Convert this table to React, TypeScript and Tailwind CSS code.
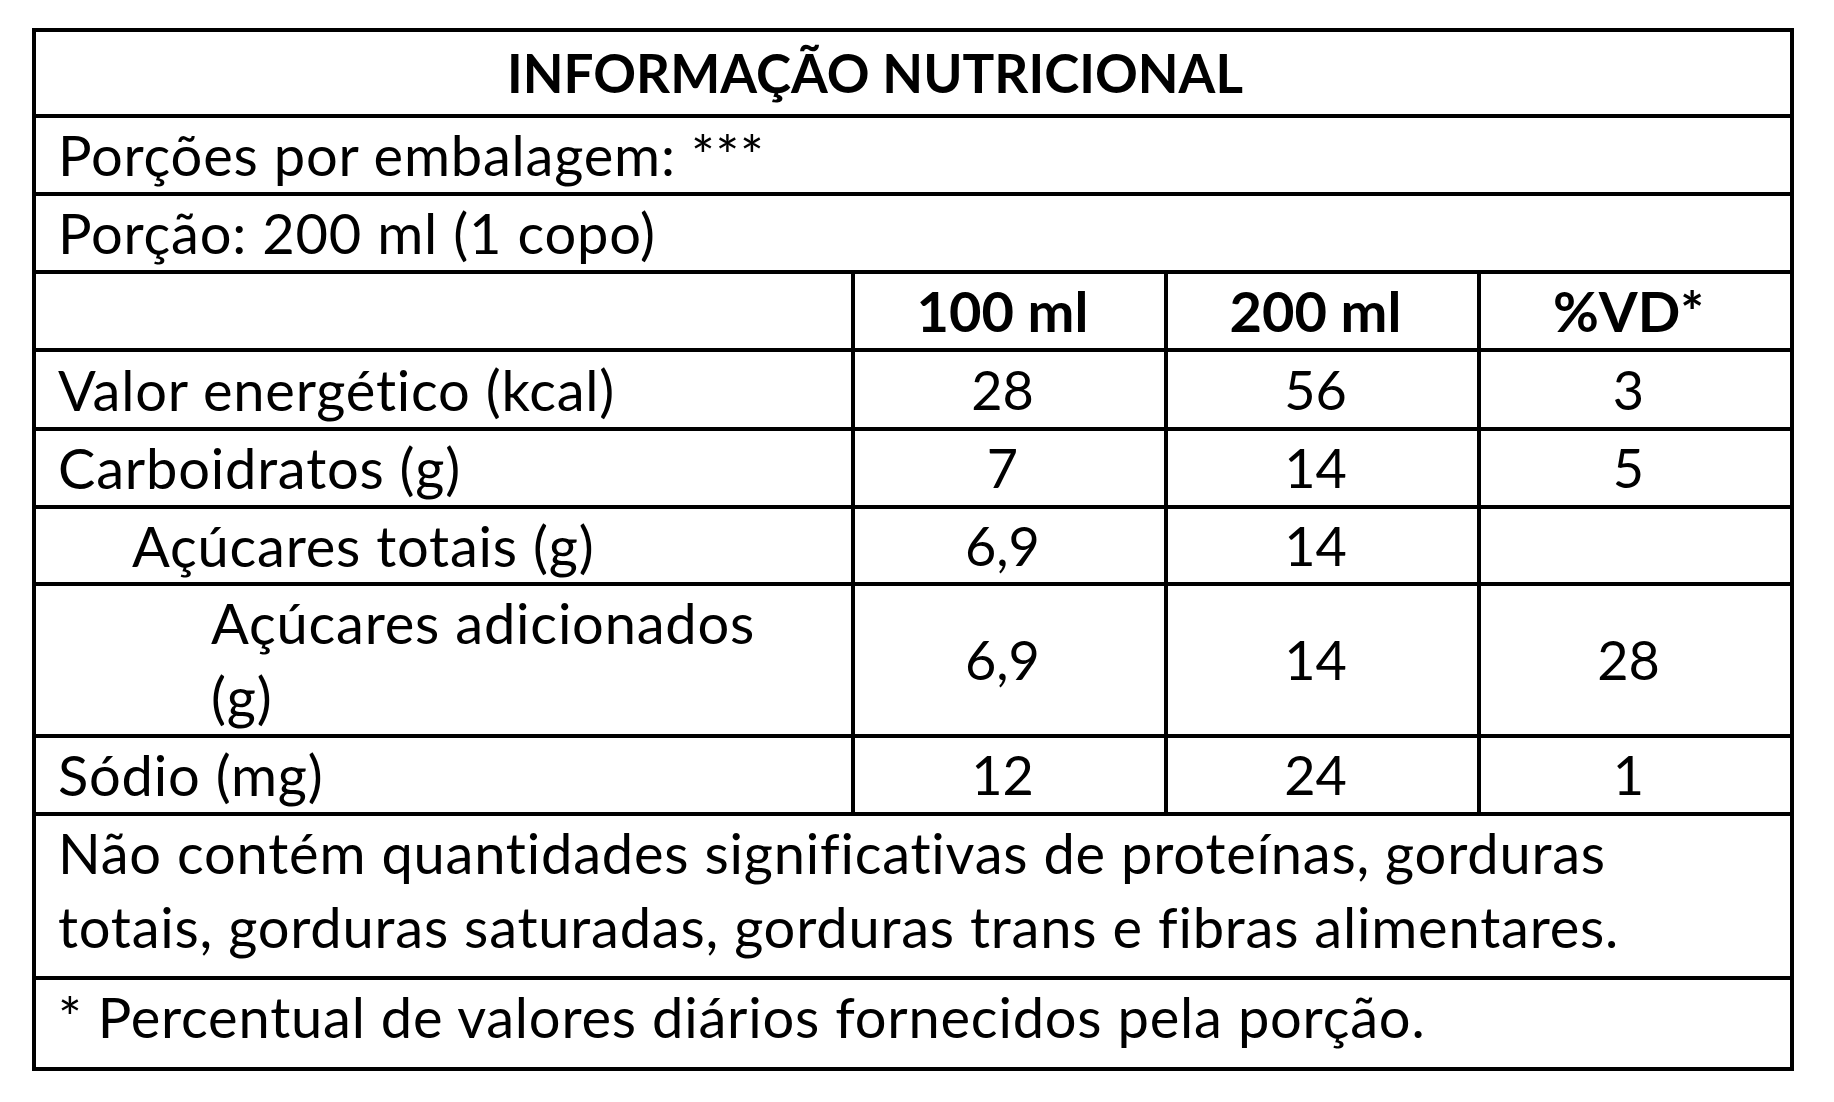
import React from "react";

const font = { fontFamily: "Lato, 'Open Sans', sans-serif" };

const lbl = "text-[56px] tracking-[0.8px]";

function Row({
  label,
  v1,
  v2,
  v3,
  indent,
  bold,
  h,
}: {
  label: React.ReactNode;
  v1: string;
  v2: string;
  v3: string;
  indent: string;
  bold?: boolean;
  h: string;
}) {
  const txt = bold ? "font-bold text-[56px]" : "text-[54px]";
  return (
    <div className={`grid grid-cols-[815px_313px_313px_313px] border-t-4 border-black ${h}`}>
      <div className={`flex items-center ${indent} ${lbl}`}>
        <span>{label}</span>
      </div>
      <div className={`flex items-center justify-center border-l-4 border-black pr-[14px] ${txt}`}>{v1}</div>
      <div className={`flex items-center justify-center border-l-4 border-black pr-[14px] ${txt}`}>{v2}</div>
      <div className={`flex items-center justify-center border-l-4 border-black pr-[14px] ${txt}`}>{v3}</div>
    </div>
  );
}

export default function App() {
  return (
    <div className="w-[1834px] h-[1102px] bg-white text-black overflow-hidden" style={font}>
      <div className="ml-[32px] mt-[28px] w-[1762px] border-4 border-black text-[54px] leading-[74px]">
        <div className="h-[82px] flex items-center justify-center pr-[76px] font-bold text-[53px]">
          INFORMAÇÃO NUTRICIONAL
        </div>
        <div className={`h-[78px] border-t-4 border-black flex items-center pl-[22px] ${lbl}`}>
          Porções por embalagem: ***
        </div>
        <div className={`h-[78px] border-t-4 border-black flex items-center pl-[22px] ${lbl}`}>
          Porção: 200 ml (1 copo)
        </div>
        <Row label="" v1="100 ml" v2="200 ml" v3="%VD*" indent="pl-[22px]" bold h="h-[78px]" />
        <Row label="Valor energético (kcal)" v1="28" v2="56" v3="3" indent="pl-[22px]" h="h-[79px]" />
        <Row label="Carboidratos (g)" v1="7" v2="14" v3="5" indent="pl-[22px]" h="h-[78px]" />
        <Row label="Açúcares totais (g)" v1="6,9" v2="14" v3="" indent="pl-[96px]" h="h-[77px]" />
        <Row
          label={
            <>
              Açúcares adicionados
              <br />
              (g)
            </>
          }
          v1="6,9"
          v2="14"
          v3="28"
          indent="pl-[175px]"
          h="h-[152px]"
        />
        <Row label="Sódio (mg)" v1="12" v2="24" v3="1" indent="pl-[22px]" h="h-[78px]" />
        <div className={`h-[164px] border-t-4 border-black pl-[22px] ${lbl}`}>
          Não contém quantidades significativas de proteínas, gorduras
          <br />
          totais, gorduras saturadas, gorduras trans e fibras alimentares.
        </div>
        <div className={`h-[91px] border-t-4 border-black pl-[22px] ${lbl}`}>
          * Percentual de valores diários fornecidos pela porção.
        </div>
      </div>
    </div>
  );
}
